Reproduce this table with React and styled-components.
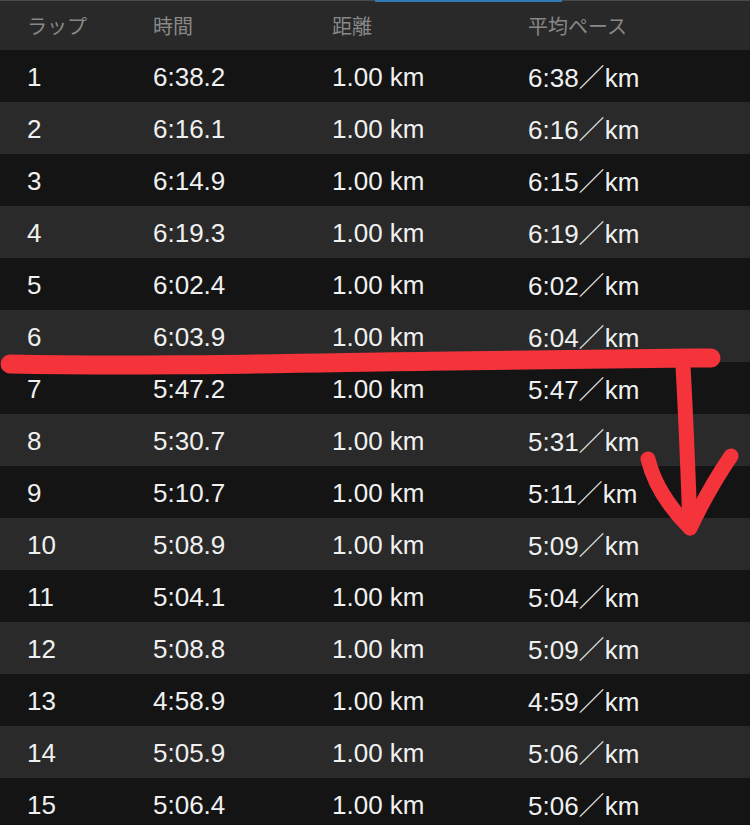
import React from "react"
import styled, { createGlobalStyle } from "styled-components"

const GlobalStyle = createGlobalStyle`
  html, body {
    margin: 0;
    padding: 0;
    background: #141414;
  }
  body {
    width: 750px;
    height: 825px;
    overflow: hidden;
  }
`

const Page = styled.div`
  position: relative;
  width: 750px;
  height: 825px;
  overflow: hidden;
  background: #141414;
  font-family: "Liberation Sans", Arial, "Noto Sans CJK JP", sans-serif;
`

const Header = styled.div`
  position: relative;
  display: grid;
  grid-template-columns: 126px 179px 196px 1fr;
  align-items: center;
  height: 50px;
  padding-left: 27px;
  background: #292929;
  border-top: 1px solid #4a4a4a;
  box-sizing: border-box;

  span {
    font-family: "Noto Sans CJK JP", sans-serif;
    font-size: 20px;
    color: #888888;
    line-height: 1;
    margin-top: 1px;
  }
`

// the selected tab indicator above the header
const Indicator = styled.div`
  position: absolute;
  top: -1px;
  left: 375px;
  width: 187px;
  height: 2px;
  background: #2f7ab5;
`

const Row = styled.div`
  display: grid;
  grid-template-columns: 126px 179px 196px 1fr;
  align-items: center;
  height: 52px;
  padding-left: 27px;
  background: ${p => (p.$odd ? "#141414" : "#2a2a2a")};
  color: #f0f0f0;
  font-size: 26px;

  span {
    line-height: 1;
    margin-top: 2px;
  }
`

const Slash = styled.span`
  font-family: "Noto Sans CJK JP", sans-serif;
  font-weight: 300;
`

const Marker = styled.svg`
  position: absolute;
  top: 0;
  left: 0;
  pointer-events: none;
`

const laps = [
  ["6:38.2", "6:38"],
  ["6:16.1", "6:16"],
  ["6:14.9", "6:15"],
  ["6:19.3", "6:19"],
  ["6:02.4", "6:02"],
  ["6:03.9", "6:04"],
  ["5:47.2", "5:47"],
  ["5:30.7", "5:31"],
  ["5:10.7", "5:11"],
  ["5:08.9", "5:09"],
  ["5:04.1", "5:04"],
  ["5:08.8", "5:09"],
  ["4:58.9", "4:59"],
  ["5:05.9", "5:06"],
  ["5:06.4", "5:06"],
]

const App = () => {
  return (
    <Page>
      <GlobalStyle />
      <Header>
        <Indicator />
        <span>ラップ</span>
        <span>時間</span>
        <span>距離</span>
        <span>平均ペース</span>
      </Header>
      {laps.map(([time, pace], i) => (
        <Row key={i} $odd={i % 2 === 0}>
          <span>{i + 1}</span>
          <span>{time}</span>
          <span>1.00 km</span>
          <span>
            {pace}
            <Slash as="span">／</Slash>
            km
          </span>
        </Row>
      ))}
      <Marker width="750" height="825" viewBox="0 0 750 825">
        <g fill="none" stroke="#f5333b" strokeLinecap="round" strokeLinejoin="round">
          <path d="M 10 364 C 150 367, 300 363, 450 361 S 650 358, 711 358" strokeWidth="19" />
          <path d="M 683 366 C 686 420, 688 470, 690 527" strokeWidth="15" />
          <path d="M 648 459 C 655 488, 672 510, 690 528" strokeWidth="15" />
          <path d="M 731 456 C 716 478, 701 505, 690 528" strokeWidth="15" />
        </g>
      </Marker>
    </Page>
  )
}

export default App
